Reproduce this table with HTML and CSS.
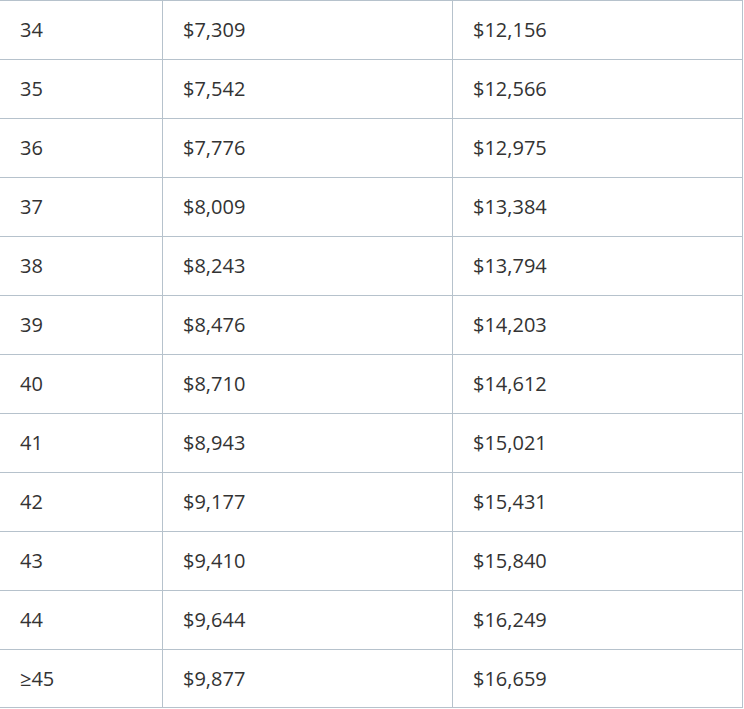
FILE: index.html
```html
<!DOCTYPE html>
<html>
<head>
<meta charset="utf-8">
<link rel="stylesheet" href="styles.css">
</head>
<body>
<table class="rates">
<tbody>
<tr><td>34</td><td>$7,309</td><td>$12,156</td></tr>
<tr><td>35</td><td>$7,542</td><td>$12,566</td></tr>
<tr><td>36</td><td>$7,776</td><td>$12,975</td></tr>
<tr><td>37</td><td>$8,009</td><td>$13,384</td></tr>
<tr><td>38</td><td>$8,243</td><td>$13,794</td></tr>
<tr><td>39</td><td>$8,476</td><td>$14,203</td></tr>
<tr><td>40</td><td>$8,710</td><td>$14,612</td></tr>
<tr><td>41</td><td>$8,943</td><td>$15,021</td></tr>
<tr><td>42</td><td>$9,177</td><td>$15,431</td></tr>
<tr><td>43</td><td>$9,410</td><td>$15,840</td></tr>
<tr><td>44</td><td>$9,644</td><td>$16,249</td></tr>
<tr><td>≥45</td><td>$9,877</td><td>$16,659</td></tr>
</tbody>
</table>
</body>
</html>
```
FILE: styles.css
```css
html, body {
  margin: 0;
  padding: 0;
  background: #fff;
}
.rates {
  border-collapse: separate;
  border-spacing: 0;
  table-layout: fixed;
  width: 743px;
  border-top: 1px solid #b6c2cc;
  font-family: "Open Sans", sans-serif;
  font-size: 20px;
  color: #333;
}
.rates td {
  box-sizing: border-box;
  height: 59px;
  padding: 0 0 2px 20px;
  border-right: 1px solid #b6c2cc;
  border-bottom: 1px solid #b6c2cc;
  vertical-align: middle;
  white-space: nowrap;
}
.rates td:nth-child(1) { width: 163px; }
.rates td:nth-child(2) { width: 290px; }
.rates td:nth-child(3) { width: 290px; }
.rates tr:last-child td { height: 58px; padding-bottom: 1px; }
```
